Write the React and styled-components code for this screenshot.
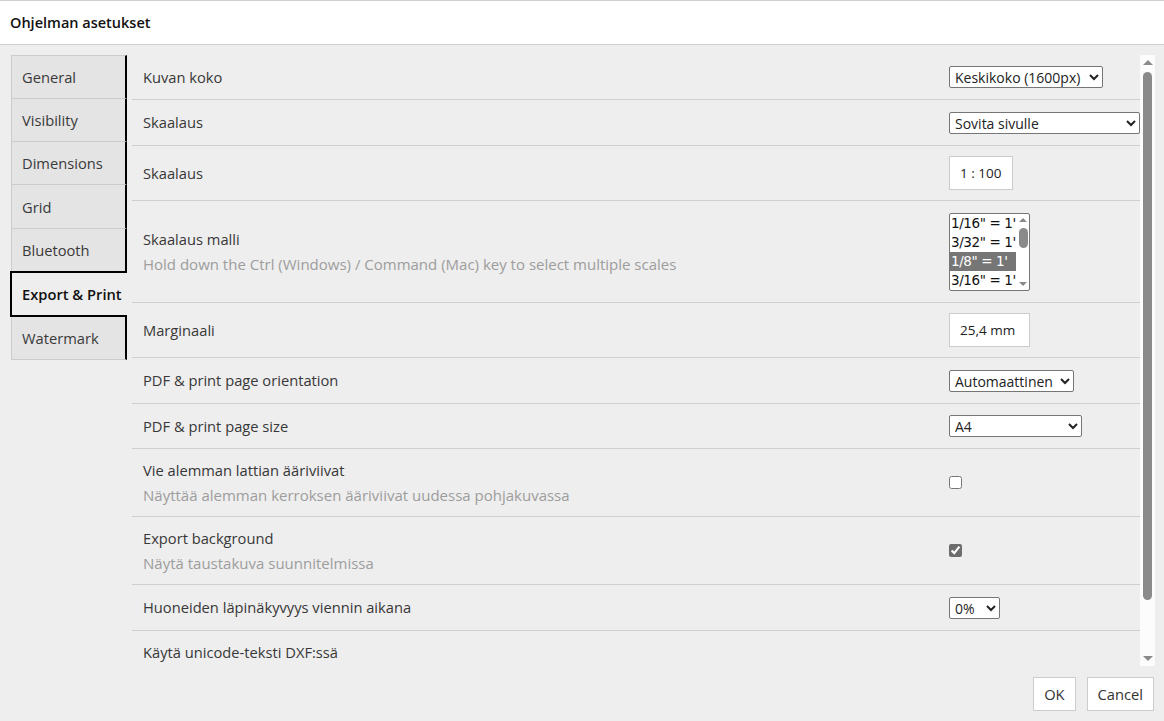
import React from "react";
import styled, { createGlobalStyle } from "styled-components";

const Global = createGlobalStyle`
  html, body { margin: 0; padding: 0; }
  body {
    background: #eeeeee;
    font-family: "Open Sans", "Noto Sans", Arial, sans-serif;
    color: #333;
  }
  * { box-sizing: border-box; }
`;

const Page = styled.div`
  width: 1164px;
  height: 721px;
  display: flex;
  flex-direction: column;
  background: #eeeeee;
  overflow: hidden;
`;

const Header = styled.div`
  height: 45px;
  flex: none;
  background: #fff;
  border-top: 1px solid #cfcfcf;
  border-bottom: 1px solid #cfcfcf;
  display: flex;
  align-items: center;
  padding-left: 10px;
  font-size: 14.5px;
  font-weight: 600;
  color: #111;
`;

const Body = styled.div`
  flex: 1;
  display: flex;
  padding: 10px 9px 0 11px;
  min-height: 0;
`;

const Tabs = styled.div`
  width: 116px;
  flex: none;
  display: flex;
  flex-direction: column;
`;

const Tab = styled.div`
  height: ${p => p.$h}px;
  display: flex;
  align-items: center;
  padding-left: 10px;
  font-size: 14.7px;
  color: ${p => (p.$active ? "#111" : "#3a3a3a")};
  font-weight: ${p => (p.$active ? 600 : 400)};
  background: ${p => (p.$active ? "#eeeeee" : "#e4e4e4")};
  border: 1px solid #cccccc;
  border-top: ${p => (p.$first ? "1px solid #ccc" : "none")};
  border-right: 2px solid #000;
  ${p =>
    p.$active &&
    `
    border: 2px solid #000;
    border-right: none;
    margin-left: -1px;
    margin-top: -1px;
  `}
`;

const Main = styled.div`
  flex: 1;
  display: flex;
  flex-direction: column;
  margin-left: 5px;
  min-width: 0;
`;

const ScrollArea = styled.div`
  height: 611px;
  display: flex;
`;

const Rows = styled.div`
  flex: 1;
  overflow: hidden;
  display: flex;
  flex-direction: column;
`;

const Row = styled.div`
  height: ${p => p.$h}px;
  flex: none;
  display: grid;
  grid-template-columns: 1fr 191px;
  align-items: center;
  border-bottom: 1px solid #cfcfcf;
  padding-left: 11px;
`;

const LabelBox = styled.div`
  display: flex;
  flex-direction: column;
`;

const Label = styled.div`
  font-size: 14.7px;
  line-height: 25px;
  color: #383838;
`;

const Hint = styled.div`
  font-size: 15px;
  line-height: 25px;
  color: #9d9d9d;
`;

const Control = styled.div`
  display: flex;
  align-items: center;
`;

const Select = styled.select`
  width: ${p => p.$w}px;
  height: 22px;
  font-family: "Open Sans", "Noto Sans", Arial, sans-serif;
  font-size: 14px;
  color: #222;
  background: #fff;
  border: 1px solid #767676;
  border-radius: 2px;
  padding: 0 0 0 1px;
`;

const TextBox = styled.div`
  width: ${p => p.$w}px;
  height: 34px;
  background: #fff;
  border: 1px solid #cccccc;
  display: flex;
  align-items: center;
  padding-left: 10px;
  font-size: 13.5px;
  color: #222;
`;

const ListBox = styled.div`
  width: 81px;
  height: 78px;
  background: #fff;
  border: 1px solid #767676;
  border-radius: 2px;
  display: flex;
  overflow: hidden;
`;

const ListItems = styled.div`
  flex: 1;
  display: flex;
  flex-direction: column;
`;

const ListItem = styled.div`
  height: 19px;
  line-height: 19px;
  font-family: "DejaVu Sans", Verdana, sans-serif;
  font-size: 13.5px;
  letter-spacing: -0.4px;
  padding-left: 1px;
  white-space: nowrap;
  overflow: hidden;
  color: ${p => (p.$sel ? "#fff" : "#111")};
  background: ${p => (p.$sel ? "#767676" : "transparent")};
`;

const MiniBar = styled.div`
  width: 15px;
  flex: none;
  display: flex;
  flex-direction: column;
  align-items: center;
  padding-top: 4px;
`;

const Arrow = styled.div`
  width: 0;
  height: 0;
  border-left: ${p => p.$s}px solid transparent;
  border-right: ${p => p.$s}px solid transparent;
  ${p =>
    p.$down
      ? `border-top: ${p.$s}px solid #8a8a8a;`
      : `border-bottom: ${p.$s}px solid #8a8a8a;`}
`;

const MiniThumb = styled.div`
  width: 9px;
  height: 20px;
  background: #8a8a8a;
  border-radius: 5px;
  margin: 6px 0 auto;
`;

const Check = styled.input`
  width: 13px;
  height: 13px;
  margin: 0;
  accent-color: #6d6d6d;
`;

const Scrollbar = styled.div`
  width: 15px;
  flex: none;
  background: #fcfcfc;
  display: flex;
  flex-direction: column;
  align-items: center;
  padding: 5px 0 5px 0;
`;

const Thumb = styled.div`
  width: 9px;
  height: 528px;
  background: #8a8a8a;
  border-radius: 5px;
  margin: 7px 0 0;
`;

const Footer = styled.div`
  flex: 1;
  display: flex;
  justify-content: flex-end;
  align-items: flex-start;
  padding: 11px 1px 0 0;
  gap: 11px;
`;

const Button = styled.button`
  height: 34px;
  padding: 0 10px;
  background: #fff;
  border: 1px solid #cccccc;
  font-family: "Open Sans", "Noto Sans", Arial, sans-serif;
  font-size: 14.7px;
  color: #333;
`;

const tabs = [
  ["General", 44],
  ["Visibility", 43],
  ["Dimensions", 43],
  ["Grid", 44],
  ["Bluetooth", 43],
  ["Export & Print", 46, true],
  ["Watermark", 43],
];

function ScaleList() {
  const items = ['1/16" = 1\'', '3/32" = 1\'', '1/8" = 1\'', '3/16" = 1\''];
  return (
    <ListBox>
      <ListItems>
        {items.map((t, i) => (
          <ListItem key={t} $sel={i === 2}>
            {t}
          </ListItem>
        ))}
      </ListItems>
      <MiniBar>
        <Arrow $s={4} />
        <MiniThumb />
        <Arrow $s={4} $down style={{ marginBottom: 4 }} />
      </MiniBar>
    </ListBox>
  );
}

export default function App() {
  return (
    <Page>
      <Global />
      <Header>Ohjelman asetukset</Header>
      <Body>
        <Tabs>
          {tabs.map(([name, h, active], i) => (
            <Tab key={name} $h={h} $active={active} $first={i === 0}>
              {name}
            </Tab>
          ))}
        </Tabs>
        <Main>
          <ScrollArea>
            <Rows>
              <Row $h={45}>
                <Label>Kuvan koko</Label>
                <Control>
                  <Select $w={154} defaultValue="m">
                    <option value="m">Keskikoko (1600px)</option>
                  </Select>
                </Control>
              </Row>
              <Row $h={46}>
                <Label>Skaalaus</Label>
                <Control>
                  <Select $w={191} defaultValue="f">
                    <option value="f">Sovita sivulle</option>
                  </Select>
                </Control>
              </Row>
              <Row $h={55}>
                <Label>Skaalaus</Label>
                <Control>
                  <TextBox $w={64}>1 : 100</TextBox>
                </Control>
              </Row>
              <Row $h={102}>
                <LabelBox>
                  <Label>Skaalaus malli</Label>
                  <Hint>Hold down the Ctrl (Windows) / Command (Mac) key to select multiple scales</Hint>
                </LabelBox>
                <Control>
                  <ScaleList />
                </Control>
              </Row>
              <Row $h={55}>
                <Label>Marginaali</Label>
                <Control>
                  <TextBox $w={81}>25,4 mm</TextBox>
                </Control>
              </Row>
              <Row $h={46}>
                <Label>PDF &amp; print page orientation</Label>
                <Control>
                  <Select $w={125} defaultValue="a">
                    <option value="a">Automaattinen</option>
                  </Select>
                </Control>
              </Row>
              <Row $h={45}>
                <Label>PDF &amp; print page size</Label>
                <Control>
                  <Select $w={133} defaultValue="a4">
                    <option value="a4">A4</option>
                  </Select>
                </Control>
              </Row>
              <Row $h={68}>
                <LabelBox>
                  <Label>Vie alemman lattian ääriviivat</Label>
                  <Hint>Näyttää alemman kerroksen ääriviivat uudessa pohjakuvassa</Hint>
                </LabelBox>
                <Control>
                  <Check type="checkbox" readOnly />
                </Control>
              </Row>
              <Row $h={68}>
                <LabelBox>
                  <Label>Export background</Label>
                  <Hint>Näytä taustakuva suunnitelmissa</Hint>
                </LabelBox>
                <Control>
                  <Check type="checkbox" defaultChecked />
                </Control>
              </Row>
              <Row $h={46}>
                <Label>Huoneiden läpinäkyvyys viennin aikana</Label>
                <Control>
                  <Select $w={51} defaultValue="0">
                    <option value="0">0%</option>
                  </Select>
                </Control>
              </Row>
              <Row $h={68}>
                <LabelBox>
                  <Label>Käytä unicode-teksti DXF:ssä</Label>
                  <Hint>&nbsp;</Hint>
                </LabelBox>
                <Control />
              </Row>
            </Rows>
            <Scrollbar>
              <Arrow $s={5} />
              <Thumb />
              <Arrow $s={5} $down style={{ marginTop: "auto" }} />
            </Scrollbar>
          </ScrollArea>
          <Footer>
            <Button>OK</Button>
            <Button>Cancel</Button>
          </Footer>
        </Main>
      </Body>
    </Page>
  );
}
